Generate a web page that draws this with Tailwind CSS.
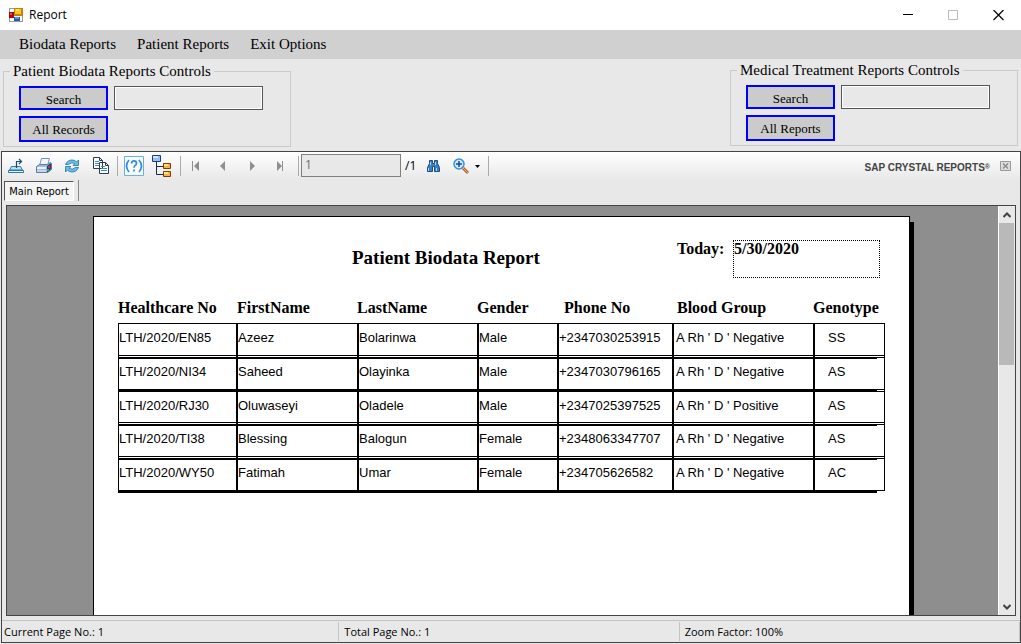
<!DOCTYPE html>
<html lang="en">
<head>
<meta charset="utf-8">
<title>Report</title>
<script src="https://cdn.jsdelivr.net/npm/@tailwindcss/browser@4"></script>
</head>
<body class="flex h-screen flex-col overflow-hidden bg-[#e8e8e8] font-['Liberation_Serif',serif] text-black">

<header class="flex h-[30px] shrink-0 items-center bg-white pl-2 font-['Open_Sans',sans-serif] text-xs">
  <svg class="size-4" viewBox="0 0 16 16" shape-rendering="crispEdges">
    <path fill="#999" d="M1 1h14v14H1z"/><path fill="#fff" d="M2 2h4v3H2zM2 11h4v3H2zM12 10h2v4h-2z"/>
    <path fill="#eee" d="M6 9h8v1H6z"/>
    <path fill="#a00d0d" d="M1 5h5v6H1z"/><path fill="#e05a4a" d="M2 6h2v2H2z"/>
    <path fill="#c98200" d="M6 1h9v8H6z"/><path fill="#ffc423" d="M7 2h6v5H7z"/><path fill="#ffe08a" d="M8 2h3v2H8z"/>
    <path fill="#2458b8" d="M6 10h6v4H6z"/><path fill="#5d92ea" d="M7 10h4v2H7z"/>
  </svg>
  <h1 class="ml-[5px] flex-1">Report</h1>
  <button aria-label="Minimize" class="grid h-full w-[46px] place-items-center"><svg class="size-[11px]" viewBox="0 0 11 11"><path stroke="#000" d="M0 4.500h10"/></svg></button>
  <button aria-label="Maximize" disabled class="grid h-full w-[45px] place-items-center"><svg class="size-[11px]" viewBox="0 0 11 11"><path fill="none" stroke="#bbb" d="M.5.5h9v9h-9z"/></svg></button>
  <button aria-label="Close" class="grid h-full w-[45px] place-items-center"><svg class="size-[11px]" viewBox="0 0 11 11"><path stroke="#000" stroke-width="1.200" d="M.5 0l10 10m0-10l-10 10"/></svg></button>
</header>

<nav class="flex h-[29px] shrink-0 items-center gap-[21px] bg-[#d0d0d0] pl-[19px] text-[15px]">
  <button>Biodata Reports</button><button>Patient Reports</button><button>Exit Options</button>
</nav>

<section class="flex h-[92px] shrink-0 items-start justify-between px-[3px] pt-px">
  <fieldset class="mt-px h-[86px] w-[288px] border border-[#cacaca] pl-[15px]">
    <legend class="-ml-[9px] px-[3px] text-[15px] leading-[20px]">Patient Biodata Reports Controls</legend>
    <div class="mt-[5px] flex gap-[6px]">
      <button class="h-6 w-[89px] border-2 border-[#0000ff] bg-[#cbcbcb] pt-[3px] text-[13px] leading-4">Search</button>
      <input aria-label="Search patient biodata" class="h-6 w-[149px] border border-[#555] px-1 text-sm ring-1 ring-white ring-inset">
    </div>
    <button class="mt-[6px] h-[26px] w-[89px] border-2 border-[#0000ff] bg-[#cbcbcb] pt-[2px] text-[13px] leading-4">All Records</button>
  </fieldset>
  <fieldset class="h-[86px] w-[288px] border border-[#cacaca] pl-[15px]">
    <legend class="-ml-[9px] px-[3px] text-[15px] leading-[20px]">Medical Treatment Reports Controls</legend>
    <div class="mt-[5px] flex gap-[6px]">
      <button class="h-6 w-[89px] border-2 border-[#0000ff] bg-[#cbcbcb] pt-[3px] text-[13px] leading-4">Search</button>
      <input aria-label="Search treatment reports" class="h-6 w-[149px] border border-[#555] px-1 text-sm ring-1 ring-white ring-inset">
    </div>
    <button class="mt-[6px] h-[26px] w-[89px] border-2 border-[#0000ff] bg-[#cbcbcb] pt-[2px] text-[13px] leading-4">All Reports</button>
  </fieldset>
</section>

<main class="mb-px ml-px flex min-h-0 flex-1 flex-col border border-[#444]">
  <div class="flex h-[28px] shrink-0 items-center bg-linear-to-b from-white to-[#e8e8e8] pl-[6px] font-['Open_Sans',sans-serif] text-xs">
    <button aria-label="Export"><svg class="h-5 w-4" viewBox="0 0 16 20"><path fill="#b5e0f5" stroke="#2c78a8" d="M3.500 10.500h9l2 3.500h-13z"/><path fill="#e4f5fd" stroke="#2c78a8" d="M.5 14.500h15v2H.5z"/><path fill="none" stroke="#174d78" stroke-width="1.200" d="M8.500 12V5.500h5M11 3l2.500 2.500L11 8"/></svg></button>
    <button aria-label="Print" class="ml-3"><svg class="h-5 w-4" viewBox="0 0 16 20"><path fill="#f2f8ff" stroke="#7393b8" d="M5.500 2.500h8l-2 7h-8z"/><path fill="#9dbbe2" stroke="#5b7aa8" d="M.5 10.500l3-2h8l3-2 1 1v6l-4 3H.5z"/><path fill="#27407c" d="M11 10l4-3v6l-3 3h-1z"/><path fill="#eef4fc" d="M1 11h9v2H1z"/><path fill="#c6d8ee" d="M1 14h9v2H1z"/><path fill="#e03030" d="M12 10h2v2h-2z"/><path fill="#3ab54a" d="M11 13h2v2h-2z"/></svg></button>
    <button aria-label="Refresh" class="ml-3"><svg class="h-5 w-4" viewBox="0 0 16 20"><path fill="#63c0e8" stroke="#2474a6" stroke-width=".8" d="M1.500 8.500Q3.500 4 8 4q3 0 4.500 2L14.500 4v5.500H9L10.800 7.700Q8 5.500 4.500 8.500z"/><path fill="#63c0e8" stroke="#2474a6" stroke-width=".8" d="M14.500 11.500Q12.500 16 8 16q-3 0-4.500-2l-2 2v-5.500H7l-1.800 1.800q2.800 2.200 6.300-.8z"/></svg></button>
    <button aria-label="Copy" class="ml-3"><svg class="h-5 w-[18px]" viewBox="0 0 18 20"><path fill="#fff" stroke="#2a3b50" d="M1.500 1.500h6l3 3v8h-9zM7.500 6.500h6l3 3v8h-9z"/><path fill="none" stroke="#2a3b50" d="M7.500 1.500v3h3M13.500 6.500v3h3"/><path stroke="#3f86cc" d="M3 5.500h4M3 7.500h4M3 9.500h4M9 10.500h4M9 12.500h6M9 14.500h6"/></svg></button>
    <i class="ml-[7px] h-5 w-px bg-[#aaa]"></i>
    <button aria-label="Toggle parameter panel" aria-pressed="true" class="ml-[6px]"><svg class="size-5" viewBox="0 0 20 20"><path fill="#fafdff" stroke="#6aaef0" d="M.5.500h19v19H.5z"/><path fill="none" stroke="#2f8bea" stroke-width="1.700" d="M5 4Q0 10 5 16M15 4q5 6 0 12M7.500 7.500q0-2.700 2.500-2.700t2.500 2.400q0 1.400-1.500 2.400-1 .8-1 2.200M10 13.500v2"/></svg></button>
    <button aria-label="Toggle group tree" class="ml-2"><svg class="h-[22px] w-5" viewBox="0 0 20 22"><path fill="none" stroke="#15285a" d="M4.500 7v12.500h7M4.500 11.500h7"/><path fill="#8fc0fb" stroke="#1e3c78" d="M.5.500h8v6h-8z"/><path fill="#d6e9ff" d="M1 1h5v2H1z"/><path fill="#ffb13b" stroke="#7d3a10" d="M11.500 8.500h7v5h-7zM11.500 16.500h7v5h-7z"/><path fill="#ffe48a" d="M12 9h4v2h-4zM12 17h4v2h-4z"/></svg></button>
    <i class="ml-2 h-5 w-px bg-[#aaa]"></i>
    <button aria-label="First page" class="ml-[11px]"><svg class="h-[10px] w-2" viewBox="0 0 8 10"><path fill="#8f8f8f" d="M0 0h1v10H0zM7 0v10L2 5z"/></svg></button>
    <button aria-label="Previous page" class="ml-5"><svg class="h-[10px] w-[6px]" viewBox="0 0 6 10"><path fill="#8f8f8f" d="M5 0v10L0 5z"/></svg></button>
    <button aria-label="Next page" class="ml-6"><svg class="h-[10px] w-[6px]" viewBox="0 0 6 10"><path fill="#8f8f8f" d="M0 0v10l5-5z"/></svg></button>
    <button aria-label="Last page" class="ml-[21px]"><svg class="h-[10px] w-2" viewBox="0 0 8 10"><path fill="#8f8f8f" d="M5 0h1v10H5zM0 0v10l5-5z"/></svg></button>
    <i class="ml-[13px] h-5 w-px bg-[#aaa]"></i>
    <input aria-label="Page number" value="1" class="mt-[2px] ml-[2px] h-[23px] w-[100px] self-start border border-[#7f7f7f] bg-[#e8e8e8] px-[3px] pb-[2px] text-[#6d6d6d]">
    <span class="ml-[4px] w-[21px]">/1</span>
    <button aria-label="Find text"><svg class="h-[14px] w-[15px]" viewBox="0 0 15 14"><path fill="#3c7fc0" stroke="#1b4f85" d="M3.500 1.500h3v3h2v-3h3v3l2 4v4h-5v-5h-2v5h-5v-4l2-4z"/><path stroke="#a9d4f5" d="M4.500 3v3M2.500 9v3M9.500 3v3M10.500 9v3"/></svg></button>
    <button aria-label="Zoom" class="ml-3 flex items-center gap-[5px]"><svg class="size-[17px]" viewBox="0 0 17 17"><path stroke="#b5652b" stroke-width="3" d="M10 10l5 5"/><path stroke="#f0b070" d="M10 10l5 5"/><circle cx="6" cy="6" r="5" fill="#cfeaff" stroke="#3a8fd8" stroke-width="1.500"/><path stroke="#164f8c" stroke-width="1.500" d="M3 6h6M6 3v6"/></svg><svg class="h-[3px] w-[5px]" viewBox="0 0 5 3"><path d="M0 0h5L2.500 3z"/></svg></button>
    <i class="ml-[8px] h-5 w-px bg-[#aaa]"></i>
    <span class="ml-auto pt-[3px] font-['Liberation_Sans',sans-serif] text-[10px] font-bold text-[#444]">SAP CRYSTAL REPORTS<span class="align-text-top text-[7px]">®</span></span>
    <button aria-label="Close view" disabled class="mr-[9px] ml-[10px]"><svg class="h-[10px] w-[11px]" viewBox="0 0 11 10"><path fill="#ddd" stroke="#999" d="M.5.500h10v9H.5z"/><path stroke="#888" stroke-width="1.300" d="M3 2.500l5 5m0-5l-5 5"/></svg></button>
  </div>

  <div role="tablist" class="flex h-[25px] shrink-0 pl-[2px]">
    <button role="tab" aria-selected="true" class="mt-px h-[20px] w-[70px] border border-t-[#555] border-r-white border-b-white border-l-[#555] bg-[#f4f4f4] pt-px font-['DejaVu_Sans_Condensed',sans-serif] text-[11px] leading-4 whitespace-nowrap">Main Report</button>
    <i class="ml-[4px] h-[21px] w-px bg-[#888]"></i>
  </div>

  <div class="mr-[4px] ml-[4px] flex min-h-0 flex-1 border border-[#444] bg-[#8e8e8e]">
    <div class="min-w-0 flex-1 overflow-hidden">
      <article class="mt-[10px] ml-[86px] min-h-full w-[817px] border border-black bg-white pl-6 shadow-[4px_6px_0_#000]">
        <div class="flex pt-[23px] text-base leading-[18px] font-bold">
          <h2 class="w-[559px] pt-[8px] pl-[234px] text-[19px] leading-5">Patient Biodata Report</h2>
          <span class="w-14">Today:</span>
          <time class="h-[38px] w-[147px] border border-dotted border-black leading-4">5/30/2020</time>
        </div>
        <table class="mt-[18px] w-[767px] table-fixed border-separate border-spacing-0 text-left">
          <colgroup><col class="w-[118px]"><col class="w-[121px]"><col class="w-[120px]"><col class="w-[80px]"><col class="w-[115px]"><col class="w-[141px]"><col class="w-[72px]"></colgroup>
          <thead>
            <tr class="h-[27px] align-top text-base leading-6 whitespace-nowrap">
              <th>Healthcare No</th><th class="pl-px">FirstName</th><th>LastName</th><th>Gender</th><th class="pl-[7px]">Phone No</th><th class="pl-[5px]">Blood Group</th><th>Genotype</th>
            </tr>
          </thead>
          <tbody id="rows" class="font-['Liberation_Sans',sans-serif] text-[13px] leading-4 whitespace-nowrap"></tbody>
        </table>
        <div class="h-[2px] w-[759px] bg-black"></div>
      </article>
    </div>
    <div class="flex w-[17px] shrink-0 flex-col border-l border-white bg-[#e8e8e8]">
      <button aria-label="Scroll up" class="grid h-[17px] place-items-center"><svg class="h-[6px] w-2" viewBox="0 0 8 6"><path fill="none" stroke="#444" stroke-width="2" d="M.5 5L4 1.500 7.500 5"/></svg></button>
      <div class="h-[142px] w-[15px] bg-[#b9b9b9]"></div>
      <button aria-label="Scroll down" class="mt-auto grid h-[17px] place-items-center"><svg class="h-[6px] w-2" viewBox="0 0 8 6"><path fill="none" stroke="#444" stroke-width="2" d="M.5 1L4 4.500 7.500 1"/></svg></button>
    </div>
  </div>

  <footer class="mt-[4px] flex h-[22px] shrink-0 items-stretch border-t border-[#c4c4c4] pt-px pb-px font-['Open_Sans',sans-serif] text-[11px] leading-[19px]">
    <span class="flex-1 border-r border-[#c4c4c4] pl-[2px]">Current Page No.: 1</span>
    <span class="flex-1 border-r border-[#c4c4c4] pl-[5px]">Total Page No.: 1</span>
    <span class="flex-1 border-r border-[#c4c4c4] pl-[5px]">Zoom Factor: 100%</span>
  </footer>
</main>

<script>
const people = [
  ["LTH/2020/EN85","Azeez","Bolarinwa","Male","+2347030253915","A Rh ' D ' Negative","SS"],
  ["LTH/2020/NI34","Saheed","Olayinka","Male","+2347030796165","A Rh ' D ' Negative","AS"],
  ["LTH/2020/RJ30","Oluwaseyi","Oladele","Male","+2347025397525","A Rh ' D ' Positive","AS"],
  ["LTH/2020/TI38","Blessing","Balogun","Female","+2348063347707","A Rh ' D ' Negative","AS"],
  ["LTH/2020/WY50","Fatimah","Umar","Female","+234705626582","A Rh ' D ' Negative","AC"]
];
const heights = ["h-[34px]","h-[34px]","h-[33px]","h-[34px]","h-[33px]"];
// Rules above and below each record: the thick separators stop short of the right edge.
const rules = [
  "shadow-[inset_0_-1px_0_#fff,inset_0_-2px_0_#000]",
  "shadow-[inset_0_1px_0_#000,inset_0_-2px_0_#000]",
  "shadow-[inset_0_-1px_0_#fff,inset_0_-2px_0_#000]",
  "shadow-[inset_0_1px_0_#000,inset_0_-1px_0_#fff,inset_0_-2px_0_#000]",
  "shadow-[inset_0_1px_0_#000,inset_0_-1px_0_#000]"
];
const lastRules = [
  "shadow-[inset_0_-1px_0_#fff,inset_0_-2px_0_#000]",
  "bg-[linear-gradient(#000,#000),linear-gradient(#000,#000),linear-gradient(#000,#000)] bg-no-repeat bg-[length:62px_1px,62px_1px,100%_1px] bg-[position:0_0,0_100%,0_calc(100%-1px)]",
  "shadow-[inset_0_-1px_0_#fff,inset_0_-2px_0_#000]",
  "shadow-[inset_0_-1px_0_#fff,inset_0_-2px_0_#000] bg-[linear-gradient(#000,#000)] bg-no-repeat bg-[length:62px_1px]",
  "shadow-[inset_0_-1px_0_#000] bg-[linear-gradient(#000,#000)] bg-no-repeat bg-[length:62px_1px]"
];
const cell = ["border-l","border-l-2","border-l-2","border-l-2","border-l-2","border-l-2 pl-[2px]","border-l-2 border-r pl-[13px]"];
document.getElementById("rows").innerHTML = people.map((p, r) =>
  `<tr class="${heights[r]} align-top">` + p.map((v, c) =>
    `<td class="border-t border-black pt-[6px] ${cell[c]} ${c === 6 ? lastRules[r] : rules[r]}">${v}</td>`).join("") + "</tr>").join("");
</script>
</body>
</html>
